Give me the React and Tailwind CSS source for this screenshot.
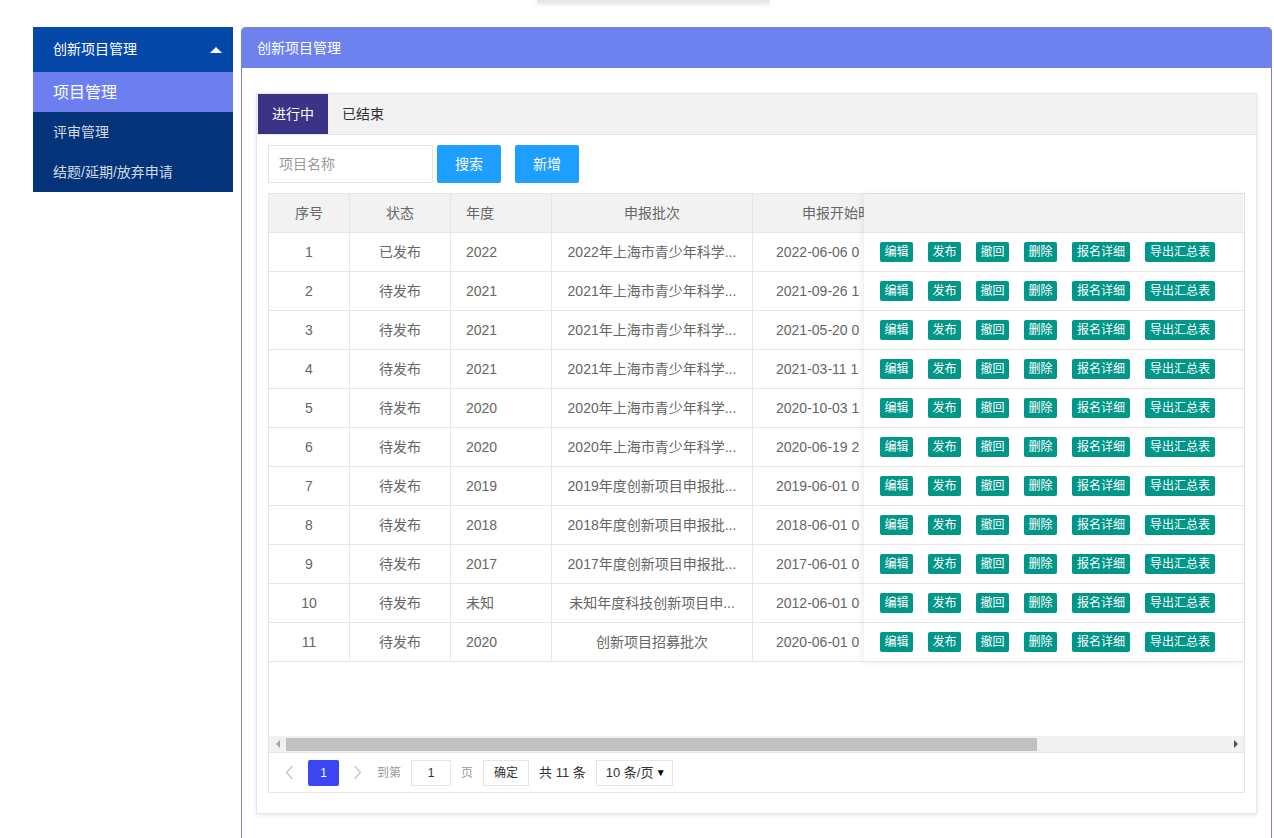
const rows = [
  { id: 1, status: '已发布', year: '2022', batch: '2022年上海市青少年科学...', start: '2022-06-06 09:00:00' },
  { id: 2, status: '待发布', year: '2021', batch: '2021年上海市青少年科学...', start: '2021-09-26 10:00:00' },
  { id: 3, status: '待发布', year: '2021', batch: '2021年上海市青少年科学...', start: '2021-05-20 09:00:00' },
  { id: 4, status: '待发布', year: '2021', batch: '2021年上海市青少年科学...', start: '2021-03-11 10:00:00' },
  { id: 5, status: '待发布', year: '2020', batch: '2020年上海市青少年科学...', start: '2020-10-03 12:00:00' },
  { id: 6, status: '待发布', year: '2020', batch: '2020年上海市青少年科学...', start: '2020-06-19 20:00:00' },
  { id: 7, status: '待发布', year: '2019', batch: '2019年度创新项目申报批...', start: '2019-06-01 00:00:00' },
  { id: 8, status: '待发布', year: '2018', batch: '2018年度创新项目申报批...', start: '2018-06-01 00:00:00' },
  { id: 9, status: '待发布', year: '2017', batch: '2017年度创新项目申报批...', start: '2017-06-01 00:00:00' },
  { id: 10, status: '待发布', year: '未知', batch: '未知年度科技创新项目申...', start: '2012-06-01 00:00:00' },
  { id: 11, status: '待发布', year: '2020', batch: '创新项目招募批次', start: '2020-06-01 00:00:00' },
]

// label + fixed width, as the buttons measure in the picture
const actions = [
  ['编辑', 'w-[33px]'],
  ['发布', 'w-[33px]'],
  ['撤回', 'w-[33px]'],
  ['删除', 'w-[33px]'],
  ['报名详细', 'w-[58px]'],
  ['导出汇总表', 'w-[70px]'],
]

function Sidebar() {
  return (
    <div className="w-[200px] shrink-0 self-start">
      <div className="flex h-[45px] items-center justify-between bg-[#0448aa] pl-[20px] pr-[11px] text-[14px] text-white">
        <span>创新项目管理</span>
        <span className="h-0 w-0 border-b-[6px] border-l-[6px] border-r-[6px] border-b-white border-l-transparent border-r-transparent" />
      </div>
      <div className="flex h-[40px] items-center bg-[#6c7ef0] pl-[20px] pt-[2px] text-[16px] text-white">项目管理</div>
      <div className="flex h-[40px] items-center bg-[#033479] pl-[20px] text-[14px] text-[#d3d9e6]">评审管理</div>
      <div className="flex h-[40px] items-center bg-[#033479] pl-[20px] text-[14px] text-[#d3d9e6]">结题/延期/放弃申请</div>
    </div>
  )
}

function Chevron({ dir }) {
  return (
    <svg width="9" height="15" viewBox="0 0 9 15" fill="none" stroke="#c2c2c2" strokeWidth="1.2">
      {dir === 'left' ? <path d="M7.5 1 L1.5 7.5 L7.5 14" /> : <path d="M1.5 1 L7.5 7.5 L1.5 14" />}
    </svg>
  )
}

function DataTable() {
  return (
    <div className="border border-[#e6e6e6] text-[14px] text-[#666]">
      <div className="flex h-[542px]">
        {/* scrolled part of the table, clipped where the fixed column starts */}
        <div className="w-[595px] shrink-0 overflow-hidden">
          <div className="flex h-[39px] border-b border-[#e6e6e6] bg-[#f2f2f2]">
            <div className="flex w-[81px] shrink-0 items-center justify-center border-r border-[#e6e6e6]">序号</div>
            <div className="flex w-[101px] shrink-0 items-center justify-center border-r border-[#e6e6e6]">状态</div>
            <div className="flex w-[101px] shrink-0 items-center border-r border-[#e6e6e6] px-[15px]">年度</div>
            <div className="flex w-[201px] shrink-0 items-center justify-center border-r border-[#e6e6e6]">申报批次</div>
            <div className="flex w-[111px] shrink-0 items-center overflow-hidden whitespace-nowrap pl-[49px]">申报开始时</div>
          </div>
          {rows.map((r) => (
            <div key={r.id} className="flex h-[39px] border-b border-[#e6e6e6]">
              <div className="flex w-[81px] shrink-0 items-center justify-center border-r border-[#e6e6e6]">{r.id}</div>
              <div className="flex w-[101px] shrink-0 items-center justify-center border-r border-[#e6e6e6]">{r.status}</div>
              <div className="flex w-[101px] shrink-0 items-center border-r border-[#e6e6e6] px-[15px]">{r.year}</div>
              <div className="flex w-[201px] shrink-0 items-center justify-center border-r border-[#e6e6e6] whitespace-nowrap">{r.batch}</div>
              <div className="flex w-[111px] shrink-0 items-center overflow-hidden whitespace-nowrap pl-[23px]">{r.start.slice(0, 12)}</div>
            </div>
          ))}
        </div>
        <div className="w-[379px] shrink-0 self-start bg-white shadow-[-1px_0_8px_rgba(0,0,0,0.08)]">
          <div className="h-[39px] border-b border-[#e6e6e6] bg-[#f2f2f2]" />
          {rows.map((r) => (
            <div key={r.id} className="flex h-[39px] items-center gap-[15px] border-b border-[#e6e6e6] pl-[16px]">
              {actions.map(([a, w]) => (
                <span key={a} className={`flex h-[20px] items-center justify-center rounded-[2px] bg-[#009688] text-[12px] text-white whitespace-nowrap ${w}`}>
                  {a}
                </span>
              ))}
            </div>
          ))}
        </div>
      </div>
      <div className="flex h-[16px] items-center bg-[#f1f1f1]">
        <div className="flex w-[17px] items-center justify-center">
          <span className="h-0 w-0 border-b-[4px] border-r-[4px] border-t-[4px] border-b-transparent border-r-[#a3a3a3] border-t-transparent" />
        </div>
        <div className="h-[13px] w-[751px] bg-[#c1c1c1]" />
        <div className="flex-1" />
        <div className="flex w-[17px] items-center justify-center">
          <span className="h-0 w-0 border-b-[4px] border-l-[4px] border-t-[4px] border-b-transparent border-l-[#505050] border-t-transparent" />
        </div>
      </div>
      <div className="flex h-[40px] items-center border-t border-[#e6e6e6] pl-[16px] text-[12px]">
        <Chevron dir="left" />
        <div className="ml-[14px] flex h-[26px] w-[31px] items-center justify-center rounded-[2px] bg-[#3b45f4] text-white">1</div>
        <div className="ml-[14px] flex">
          <Chevron dir="right" />
        </div>
        <span className="ml-[15px] text-[#999]">到第</span>
        <div className="ml-[10px] flex h-[26px] w-[40px] items-center justify-center border border-[#e6e6e6] text-[#333]">1</div>
        <span className="ml-[10px] text-[#999]">页</span>
        <div className="ml-[10px] flex h-[26px] w-[46px] items-center justify-center border border-[#e6e6e6] text-[#333]">确定</div>
        <span className="ml-[10px] text-[13px] text-[#333]">共 11 条</span>
        <div className="ml-[10px] flex h-[26px] w-[77px] items-center justify-between border border-[#e6e6e6] pl-[9px] pr-[6px] text-[13px] text-[#333]">
          <span>10 条/页</span>
          <span className="text-[10px] text-black">▼</span>
        </div>
      </div>
    </div>
  )
}

export default function App() {
  return (
    <div className="relative h-[838px] overflow-hidden bg-white font-['Liberation_Sans','Noto_Sans_CJK_SC',sans-serif]">
      <div className="absolute left-[537px] top-0 h-[3px] w-[232px] bg-[#e6e6e6] shadow-[0_1px_4px_rgba(0,0,0,0.15)]" />
      <div className="flex gap-[8px] pl-[33px] pt-[27px]">
        <Sidebar />
        <div className="h-[830px] w-[1031px] shrink-0 rounded-t-[4px] border border-[#7b84c6]">
          <div className="flex h-[40px] items-center rounded-t-[3px] bg-[#6d81ef] px-[15px] text-[14px] text-white">创新项目管理</div>
          <div className="px-[14px] pt-[25px]">
            <div className="border border-[#e6e6e6] bg-white shadow-[0_1px_4px_rgba(0,0,0,0.1)]">
              <div className="flex h-[41px] border-b border-[#e6e6e6] bg-[#f2f2f2] pl-[1px] text-[14px]">
                <div className="flex w-[70px] items-center justify-center bg-[#3b3486] text-white">进行中</div>
                <div className="flex items-center px-[14px] text-[#333]">已结束</div>
              </div>
              <div className="px-[11px] pb-[20px] pt-[10px]">
                <div className="flex items-center">
                  <div className="flex h-[38px] w-[165px] items-center border border-[#e6e6e6] px-[10px] text-[14px] text-[#999]">项目名称</div>
                  <div className="ml-[4px] flex h-[38px] w-[64px] items-center justify-center rounded-[2px] bg-[#1e9fff] text-[14px] text-white">搜索</div>
                  <div className="ml-[14px] flex h-[38px] w-[64px] items-center justify-center rounded-[2px] bg-[#1e9fff] text-[14px] text-white">新增</div>
                </div>
                <div className="mt-[10px]">
                  <DataTable />
                </div>
              </div>
            </div>
          </div>
        </div>
      </div>
    </div>
  )
}
